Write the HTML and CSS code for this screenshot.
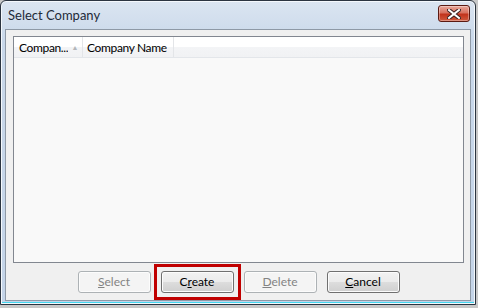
FILE: index.html
```html
<!DOCTYPE html>
<html lang="en">
<head>
    <meta charset="UTF-8">
    <title>Select Company</title>
    <link rel="stylesheet" href="styles.css">
</head>
<body>

<div class="window">
    <div class="titlebar">
        <span class="title">Select Company</span>
        <button class="close" aria-label="Close">
            <svg width="14" height="10" viewBox="0 0 14 10">
                <path d="M2 1 L12 9 M12 1 L2 9" stroke="#3a2020" stroke-width="4" stroke-linecap="square"/>
                <path d="M2 1 L12 9 M12 1 L2 9" stroke="#ffffff" stroke-width="2" stroke-linecap="square"/>
            </svg>
        </button>
    </div>

    <div class="client">
        <div class="list">
            <div class="list-header">
                <div class="col col-id"><span class="label">Compan...</span><span class="sort">&#9650;</span></div>
                <div class="col col-name"><span class="label">Company Name</span></div>
            </div>
            <div class="list-body"></div>
        </div>

        <div class="buttons">
            <button class="btn" disabled><u>S</u>elect</button>
            <span class="highlight">
                <button class="btn">C<u>r</u>eate</button>
            </span>
            <button class="btn" disabled><u>D</u>elete</button>
            <button class="btn"><u>C</u>ancel</button>
        </div>
    </div>
</div>

</body>
</html>
```

FILE: styles.css
```css
body {
    margin: 0;
    background-color: #c8c8c8;
    font-family: Lato, "Noto Sans", Arial, sans-serif;
    font-size: 12px;
    color: #000;
}

.window {
    width: 476px;
    height: 305px;
    box-sizing: border-box;
    border: 1px solid #2b3440;
    border-radius: 6px 6px 0 0;
    background: linear-gradient(#dbe5f1, #c9d8ea 40px, #c4d4e8);
    padding: 0 4px 3px 4px;
    display: flex;
    flex-direction: column;
    box-shadow: inset 0 0 0 1px #f4f8fc, inset 0 -2px 0 #43d6ef;
}

.titlebar {
    height: 28px;
    display: flex;
    align-items: center;
    justify-content: space-between;
    padding: 0 1px 0 3px;
}

.title {
    color: #1e2a38;
    font-size: 13px;
}

.close {
    width: 32px;
    height: 17px;
    margin-top: -3px;
    border: 1px solid #5b1a12;
    border-radius: 3px;
    background: linear-gradient(#e8a89c, #d8715f 45%, #c2331c 55%, #cf5a3e);
    display: flex;
    align-items: center;
    justify-content: center;
    padding: 0;
    box-shadow: inset 0 0 0 1px rgba(255, 255, 255, 0.35);
}

.client {
    flex: 1;
    background-color: #f0f0f0;
    border: 1px solid #8e99a6;
    padding: 6px 6px 0 7px;
    display: flex;
    flex-direction: column;
}

.list {
    flex: 1;
    border: 1px solid #828790;
    background-color: #f9f9f9;
    display: flex;
    flex-direction: column;
}

.list-header {
    height: 20px;
    display: flex;
    background: linear-gradient(#ffffff, #ffffff 50%, #f3f4f6 51%, #f1f2f4);
    border-bottom: 1px solid #e3e6ea;
    letter-spacing: -0.35px;
}

.col {
    display: flex;
    align-items: center;
    padding-left: 5px;
    border-right: 1px solid #e3e5e8;
    box-sizing: border-box;
    white-space: nowrap;
}

.col-id {
    width: 69px;
    padding-right: 4px;
}

.col-name {
    width: 91px;
    padding-left: 4px;
}

.label {
    flex: 0 1 auto;
    min-width: 0;
    overflow: hidden;
}

.sort {
    flex: none;
    font-size: 7px;
    color: #b3b6ba;
    margin-left: auto;
}

.list-body {
    flex: 1;
}

.buttons {
    height: 37px;
    display: flex;
    align-items: center;
    justify-content: center;
    gap: 10px;
}

.btn {
    width: 73px;
    height: 22px;
    border: 1px solid #707070;
    border-radius: 3px;
    background: linear-gradient(#f2f2f2, #ebebeb 50%, #dddddd 51%, #cfcfcf);
    box-shadow: inset 0 0 0 1px #fcfcfc;
    font-family: Lato, "Noto Sans", Arial, sans-serif;
    font-size: 12px;
    color: #000;
    padding: 0;
}

.btn:disabled {
    border-color: #adb2b5;
    background: #f4f4f4;
    color: #838383;
}

.highlight {
    margin: -7px;
    padding: 4px;
    border: 3px solid #c00000;
    display: flex;
}
```
